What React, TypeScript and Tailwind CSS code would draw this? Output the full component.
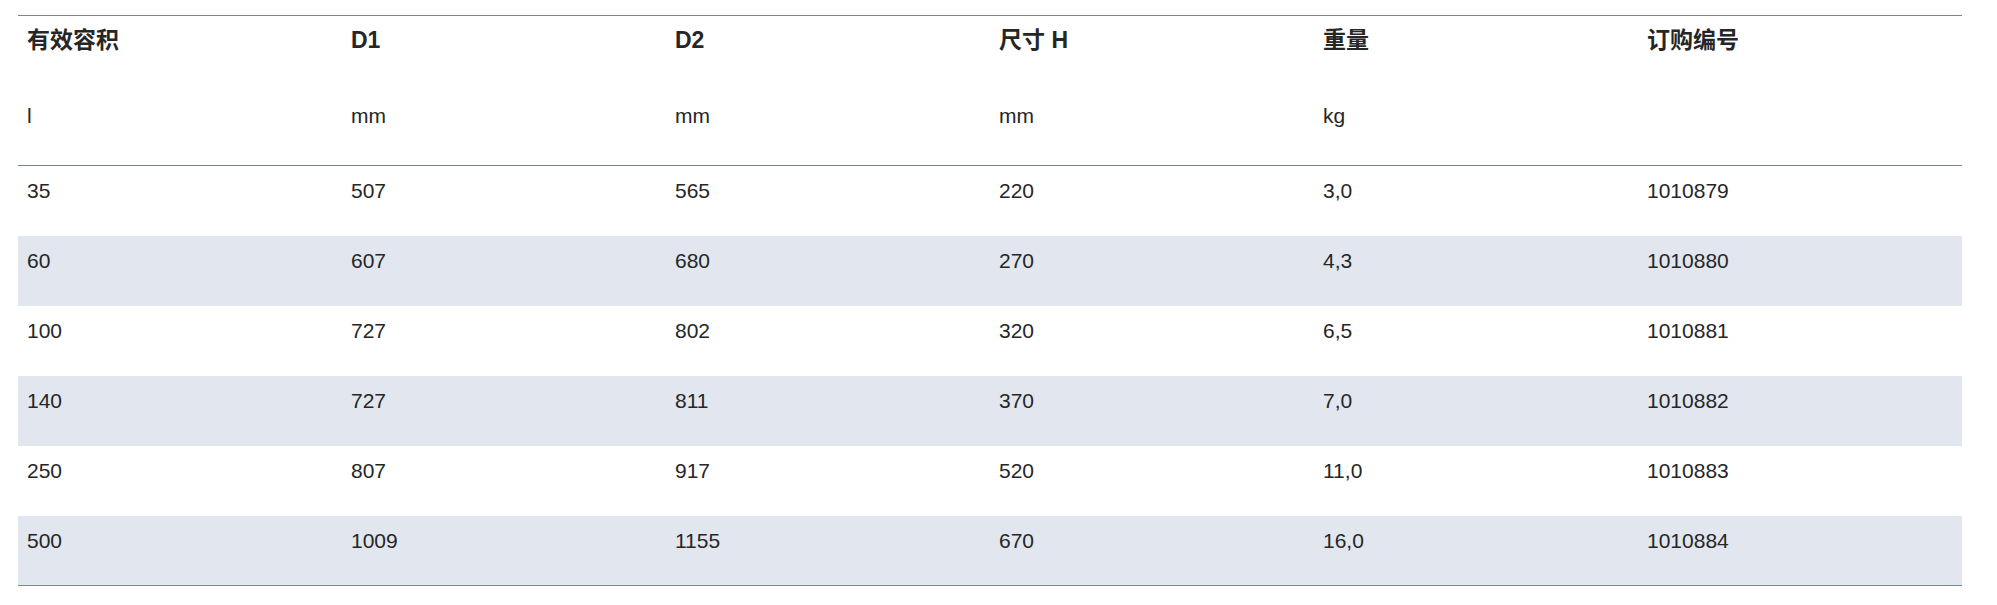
const headers = ["有效容积", "D1", "D2", "尺寸 H", "重量", "订购编号"];
const units = ["l", "mm", "mm", "mm", "kg", ""];
const rows = [
  ["35", "507", "565", "220", "3,0", "1010879"],
  ["60", "607", "680", "270", "4,3", "1010880"],
  ["100", "727", "802", "320", "6,5", "1010881"],
  ["140", "727", "811", "370", "7,0", "1010882"],
  ["250", "807", "917", "520", "11,0", "1010883"],
  ["500", "1009", "1155", "670", "16,0", "1010884"],
];

const font = { fontFamily: '"Liberation Sans", "Noto Sans CJK SC", Arial, sans-serif' };

export default function App() {
  return (
    <div className="bg-white w-full min-h-[605px] pt-[15px] px-[18px] pr-[35px]" style={font}>
      <div className="w-[1944px] text-[21px] leading-[24px] text-[#262626]">
        <div className="border-t border-[#75869a] border-b">
          <div className="grid grid-cols-6 h-[75px]">
            {headers.map((h) => (
              <div key={h} className="pl-[9px] pt-[12px] font-bold text-[23px]">
                {h}
              </div>
            ))}
          </div>
          <div className="grid grid-cols-6 h-[74px]">
            {units.map((u, i) => (
              <div key={i} className="pl-[9px] pt-[13px]">
                {u}
              </div>
            ))}
          </div>
        </div>
        <div className="border-b border-[#7388ab]">
          {rows.map((r, i) => (
            <div
              key={r[5]}
              className={`grid grid-cols-6 ${i === rows.length - 1 ? "h-[69px]" : "h-[70px]"} ${
                i % 2 === 1 ? "bg-[#e2e6ef]" : "bg-white"
              }`}
            >
              {r.map((c, j) => (
                <div key={j} className="pl-[9px] pt-[13px]">
                  {c}
                </div>
              ))}
            </div>
          ))}
        </div>
      </div>
    </div>
  );
}
